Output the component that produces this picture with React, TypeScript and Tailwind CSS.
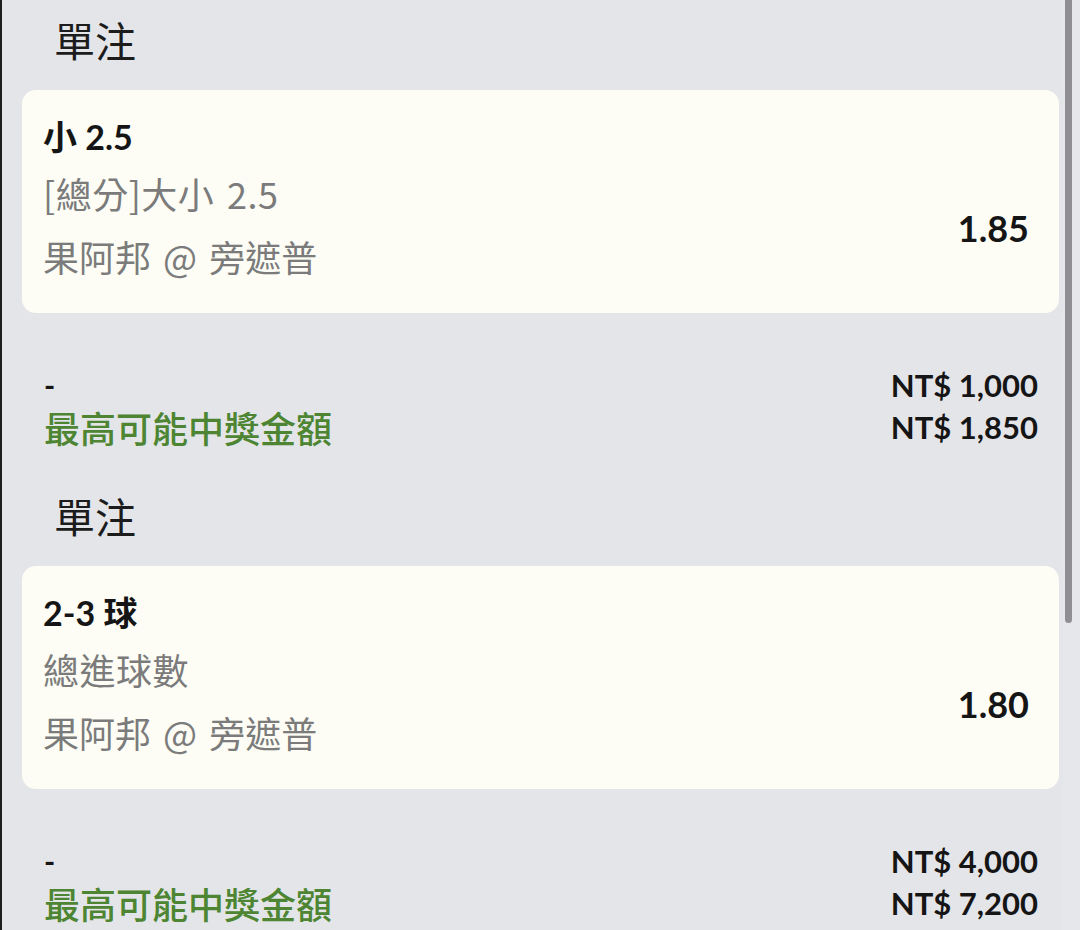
import React from "react";

const FONT = "font-['Lato','Noto_Sans_CJK_TC',sans-serif]";
const CJK = "font-['Noto_Sans_CJK_TC','Lato',sans-serif]";

type Bet = {
  title: string;
  market: string;
  match: string;
  odds: string;
  stake: string;
  payout: string;
};

const bets: Bet[] = [
  {
    title: "小 2.5",
    market: "[總分]大小 2.5",
    match: "果阿邦 @ 旁遮普",
    odds: "1.85",
    stake: "NT$ 1,000",
    payout: "NT$ 1,850",
  },
  {
    title: "2-3 球",
    market: "總進球數",
    match: "果阿邦 @ 旁遮普",
    odds: "1.80",
    stake: "NT$ 4,000",
    payout: "NT$ 7,200",
  },
];

function BetSection({ bet }: { bet: Bet }) {
  return (
    <section className="flex flex-col">
      <div className={`${CJK} h-[80px] flex items-center pl-[32px] text-[41px] text-[#1c1c1c]`}>
        單注
      </div>
      <div className="mt-[10px] bg-[#fdfdf5] rounded-[14px] pl-[21px] pr-[30px] pt-[19px] pb-[29px] flex justify-between items-start">
        <div className="flex flex-col">
          <div className="leading-[56px] text-[34px] font-bold text-[#151515]">{bet.title}</div>
          <div className={`${CJK} leading-[56px] text-[36px] tracking-[0.5px] [word-spacing:4px] text-[#7b7b7b]`}>{bet.market}</div>
          <div className={`${CJK} mt-[7px] leading-[56px] text-[36px] [word-spacing:4px] text-[#7b7b7b]`}>{bet.match}</div>
        </div>
        <div className="mt-[99px] leading-[40px] text-[36px] font-bold text-[#151515]">{bet.odds}</div>
      </div>
      <div className="mt-[51px] pl-[22px] pr-[21px] flex justify-between">
        <div className="flex flex-col">
          <div className="leading-[42px] text-[30px] font-bold text-[#151515]">-</div>
          <div className={`${CJK} leading-[42px] text-[36px] font-medium text-[#4d8532]`}>最高可能中獎金額</div>
        </div>
        <div className="flex flex-col items-end">
          <div className="leading-[42px] text-[31px] font-bold text-[#151515]">{bet.stake}</div>
          <div className="leading-[42px] text-[31px] font-bold text-[#151515]">{bet.payout}</div>
        </div>
      </div>
      <div className="h-[28px]" />
    </section>
  );
}

export default function App() {
  return (
    <div className={`${FONT} w-[1080px] h-[930px] overflow-hidden flex bg-[#e4e5e9] border-l-2 border-[#1e1e1e]`}>
      <div className="flex-1 pl-[20px] pr-[4px] flex flex-col">
        {bets.map((b, i) => (
          <BetSection key={i} bet={b} />
        ))}
      </div>
      <div className="w-[17px] bg-[#e6e7ea] flex">
        <div className="ml-[2px] w-[7px] h-[623px] bg-[#8f8f93] rounded-b-full" />
      </div>
    </div>
  );
}
